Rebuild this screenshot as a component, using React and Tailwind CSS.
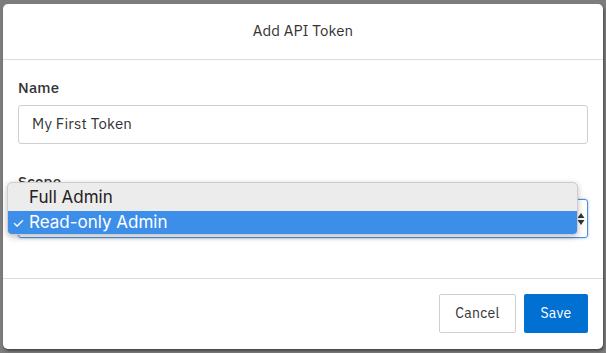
export default function App() {
  return (
    <div className="w-[606px] h-[353px] bg-[#7d7d7d] pt-[4px] pl-[3px] overflow-hidden" style={{ fontFamily: '"IBM Plex Sans", Roboto, "Noto Sans", sans-serif' }}>
      <div className="relative w-[600px] h-[345px] bg-white rounded-[5px] flex flex-col shadow-[1px_2px_3px_rgba(0,0,0,0.45)]">
        <div className="h-[56px] border-b border-[#dcdcdc] flex items-center justify-center text-[15px] text-[#333] tracking-[0.1px]">
          Add API Token
        </div>
        <div className="flex-1 px-[15px] pt-[18px] flex flex-col">
          <label className="text-[15px] leading-[20px] font-medium text-[#333] tracking-[0.2px]">Name</label>
          <div className="mt-[7px] h-[39px] border border-[#cfcfcf] rounded-[3px] flex items-center pl-[13px] text-[15px] text-[#333] tracking-[0.2px]">
            My First Token
          </div>
          <label className="mt-[28px] text-[15px] leading-[20px] font-medium text-[#333] tracking-[0.2px]">Scope</label>
          <div className="mt-[7px] h-[39px] border border-[#4a90d9] rounded-[3px] shadow-[0_0_3px_rgba(74,144,217,0.6)] flex items-center justify-end pr-[2px]">
            <svg width="8" height="16" viewBox="0 0 8 16">
              <path d="M4 2 L7.5 7 L0.5 7 Z" fill="#333" />
              <path d="M4 14 L7.5 9 L0.5 9 Z" fill="#333" />
            </svg>
          </div>
        </div>
        <div className="h-[71px] border-t border-[#dcdcdc] flex items-start justify-end gap-[8px] pt-[15px] pr-[15px]">
          <button className="w-[77px] h-[39px] border border-[#cfcfcf] rounded-[2px] bg-white text-[14px] text-[#333] tracking-[0.3px]">Cancel</button>
          <button className="w-[64px] h-[39px] rounded-[2px] bg-[#0070d2] text-[14px] text-white tracking-[0.3px]">Save</button>
        </div>
        <div className="absolute left-[4px] top-[178px] w-[571px] h-[53px] bg-[#ececec] rounded-[5px] border border-[#cdcdcd] shadow-[0_2px_6px_rgba(0,0,0,0.25)] overflow-hidden flex flex-col" style={{ fontFamily: 'Inter, "Liberation Sans", sans-serif' }}>
          <div className="h-[28px] flex items-center pl-[21px] pt-[2px] text-[17px] text-[#222]">Full Admin</div>
          <div className="h-[24px] bg-[#3d8ee9] flex items-center text-[17px] text-white">
            <span className="w-[21px] pl-[4px] text-[14px]">✓</span>
            <span>Read-only Admin</span>
          </div>
        </div>
      </div>
    </div>
  );
}
